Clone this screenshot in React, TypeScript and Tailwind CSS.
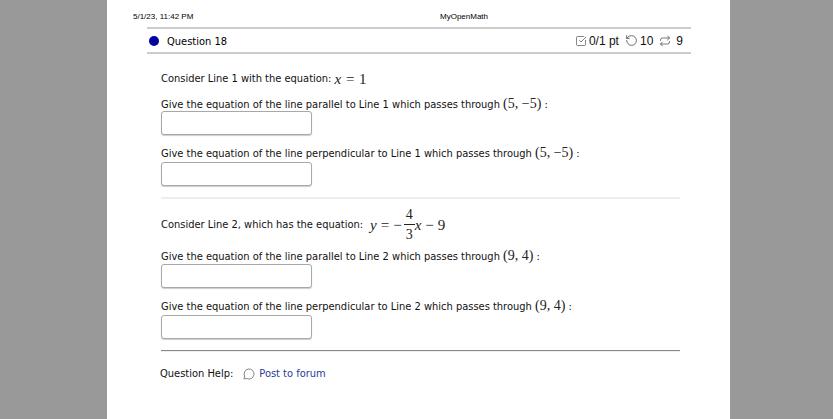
import { RotateCcw, Repeat, SquareCheckBig, MessageCircle } from "lucide-react";

const mathFont = '[font-family:"Liberation_Serif",serif]';

function AnswerBox() {
  return <div className="h-6 w-[151px] rounded-[3px] border border-[#a8a8a8] bg-white shadow-[0_1px_1px_#ccc]" />;
}

function Point({ a, b }: { a: string; b: string }) {
  return (
    <span className={`${mathFont} text-[14px] text-[#222]`}>
      ({a}, {b})
    </span>
  );
}

function Ask({ kind, line, a, b }: { kind: string; line: string; a: string; b: string }) {
  return (
    <p className="h-5 leading-5 whitespace-nowrap">
      Give the equation of the line {kind} to Line {line} which passes through <Point a={a} b={b} /> :
    </p>
  );
}

export default function App() {
  return (
    <div className="h-[419px] w-[833px] overflow-hidden bg-[#999999] pl-[107px] font-['DejaVu_Sans_Condensed','DejaVu_Sans',sans-serif] [font-stretch:condensed]">
      <div className="h-full w-[623px] bg-white text-[11px] text-[#111111]">
        <div className="relative ml-[26px] mr-[36px] flex h-[27px] items-end justify-between pb-[6px] font-['Liberation_Sans',sans-serif] text-[8px] leading-[9px] text-black [font-stretch:normal]">
          <span>5/1/23, 11:42 PM</span>
          <span className="absolute left-[307px]">MyOpenMath</span>
        </div>

        <div className="ml-[40px] mr-[39px] flex h-[27px] items-center justify-between border-y-2 border-[#cccccc]">
          <div className="flex items-center gap-[8px] pl-[2px]">
            <span className="h-[10px] w-[10px] rounded-full bg-[#00009c]" />
            <span className="pt-[3px] text-black">Question 18</span>
          </div>
          <div className="flex items-center pr-[8px] font-['Liberation_Sans',sans-serif] text-[12px] text-[#111] [font-stretch:normal]">
            <SquareCheckBig size={12} strokeWidth={1.3} className="mr-[2px] text-[#444]" />
            <span>0/1 pt</span>
            <RotateCcw size={13} strokeWidth={1.3} className="ml-[6px] mr-[2px] text-[#333]" />
            <span>10</span>
            <Repeat size={12} strokeWidth={1.3} className="ml-[6px] mr-[5px] text-[#333]" />
            <span>9</span>
          </div>
        </div>

        <div className="ml-[54px] mr-[50px] pt-[15px]">
          <p className="flex h-5 items-center gap-[3px] whitespace-nowrap">
            <span>Consider Line 1 with the equation:</span>
            <span className={`${mathFont} text-[15px] leading-none tracking-[0.5px] text-[#222]`}>
              <i>x</i> = 1
            </span>
          </p>
          <div className="mt-[5px]">
            <Ask kind="parallel" line="1" a="5" b="−5" />
            <div className="mt-[-3px]"><AnswerBox /></div>
          </div>
          <div className="mt-[8px]">
            <Ask kind="perpendicular" line="1" a="5" b="−5" />
            <div className="mt-[-1px]"><AnswerBox /></div>
          </div>

          <div className="mt-[11px] h-[2px] bg-[#eeeeee]" />

          <div className="mt-[7px] flex h-[38px] items-center whitespace-nowrap">
            <span>Consider Line 2, which has the equation:</span>
            <span className={`${mathFont} ml-[7px] flex items-center text-[15px] text-[#222]`}>
              <i>y</i>
              <span className="mx-[4px]">=</span>
              <span className="mr-[2px]">−</span>
              <span className="flex flex-col items-center text-[14px] leading-[20px]">
                <span className="border-b border-[#222] px-[2px] leading-[19px]">4</span>
                <span>3</span>
              </span>
              <i>x</i>
              <span className="mx-[4px]">−</span>
              <span>9</span>
            </span>
          </div>

          <div className="mt-[2px]">
            <Ask kind="parallel" line="2" a="9" b="4" />
            <div className="mt-[-2px]"><AnswerBox /></div>
          </div>
          <div className="mt-[8px]">
            <Ask kind="perpendicular" line="2" a="9" b="4" />
            <div className="mt-[-1px]"><AnswerBox /></div>
          </div>

          <div className="mt-[11px] h-[2px] border-t border-[#888] bg-[#eeeeee]" />

          <div className="-ml-px mt-[14px] flex items-center leading-4">
            <span>Question Help:</span>
            <MessageCircle size={12} strokeWidth={1.2} className="ml-[10px] mr-[4px] text-[#333]" />
            <span className="text-[#2a3a9a]">Post to forum</span>
          </div>
        </div>
      </div>
    </div>
  );
}
